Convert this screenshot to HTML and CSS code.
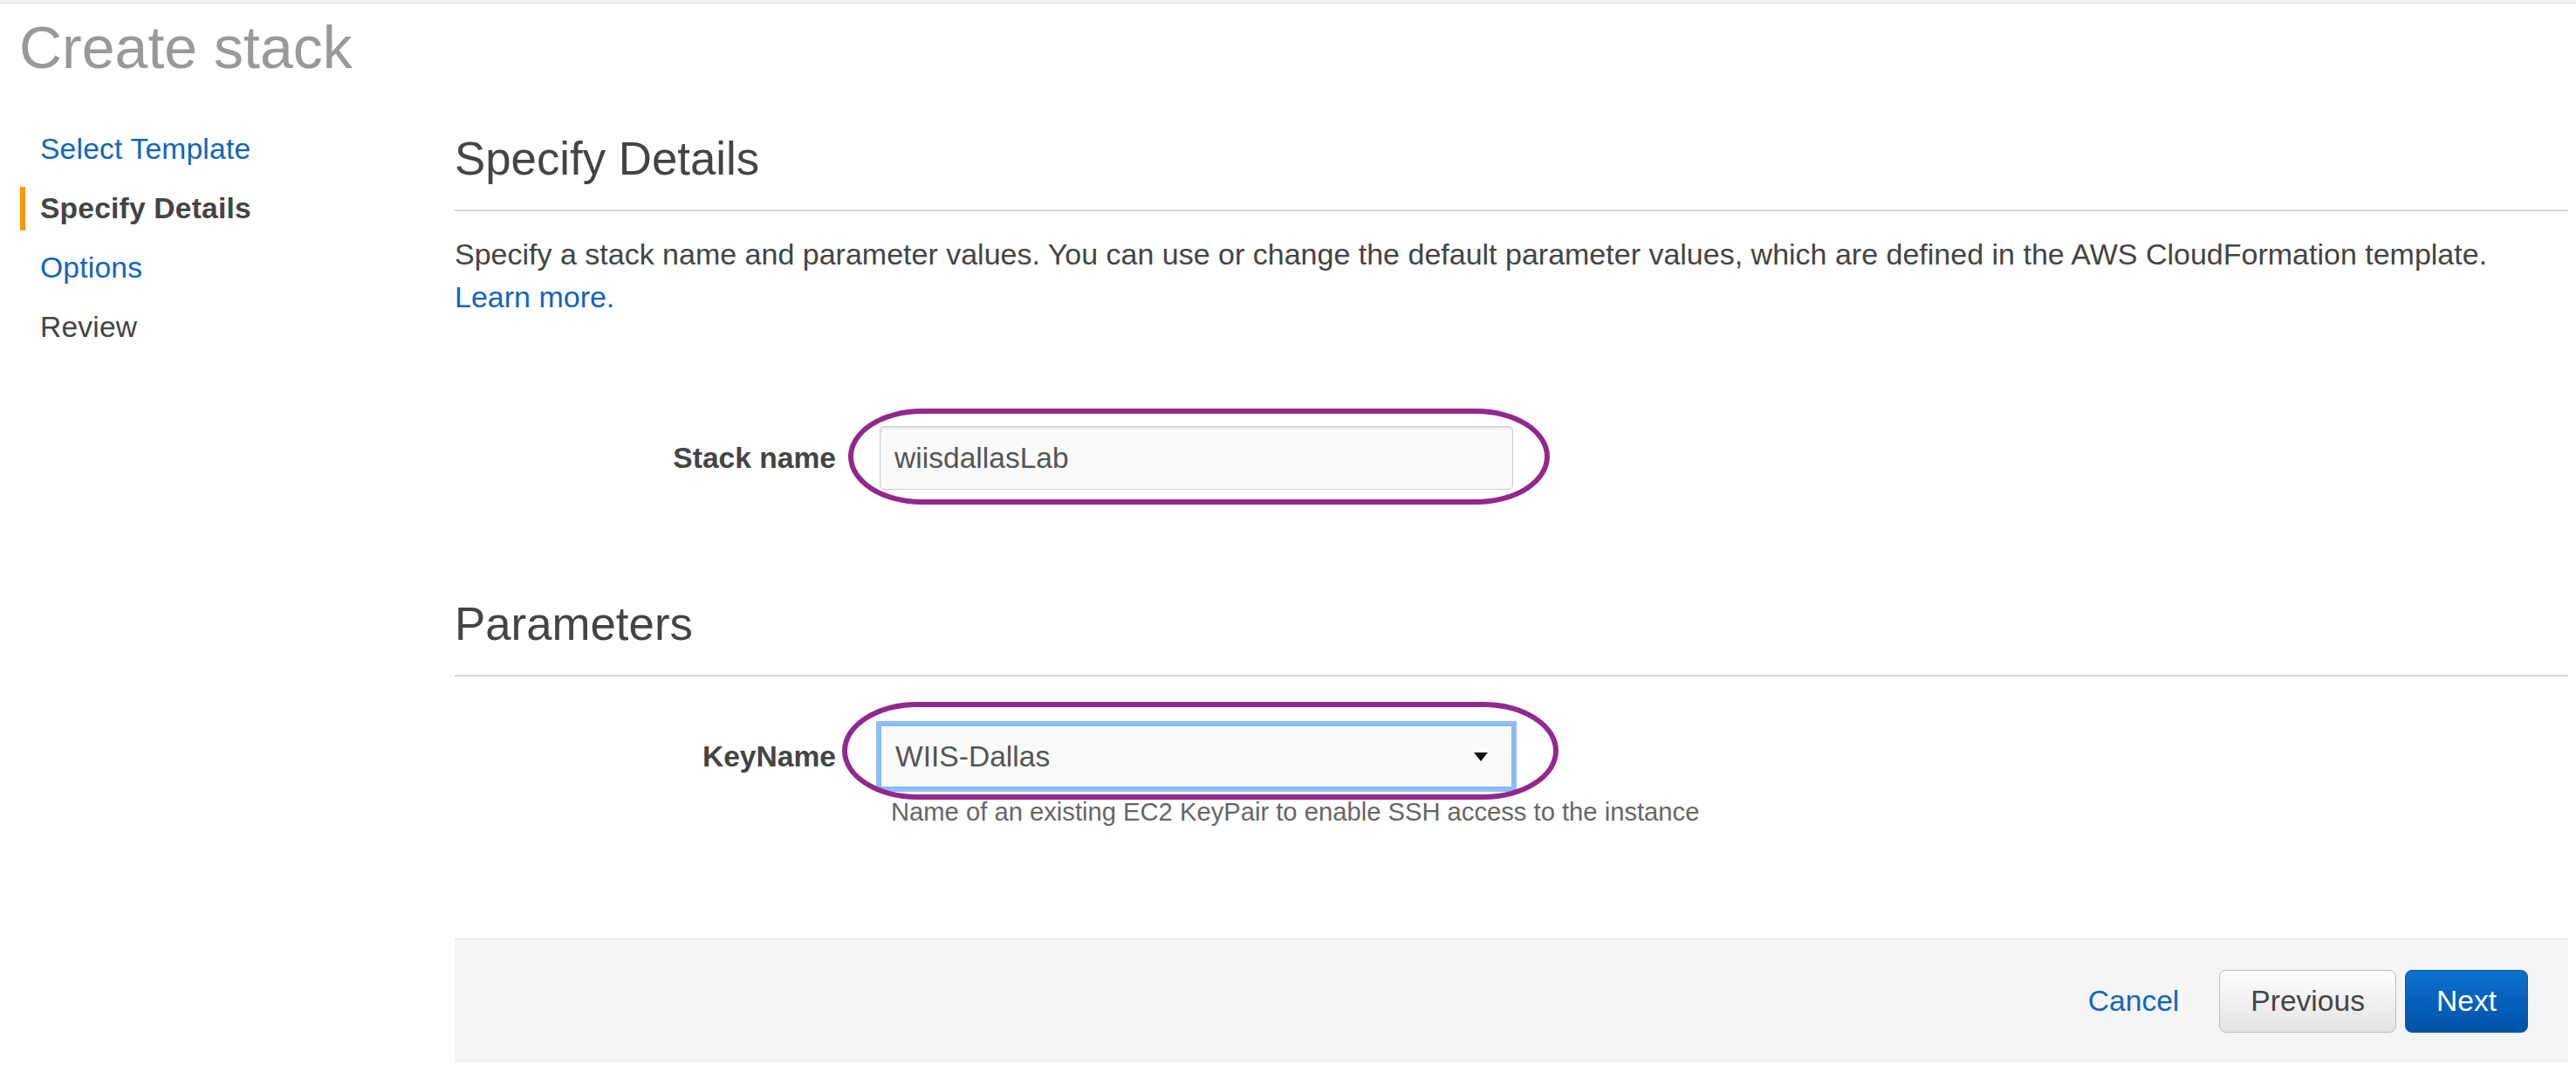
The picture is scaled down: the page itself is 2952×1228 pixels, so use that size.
FILE: index.html
```html
<!DOCTYPE html>
<html lang="en">
<head>
<meta charset="utf-8">
<title>Create stack</title>
<link rel="stylesheet" href="styles.css">
</head>
<body>
<div class="topbar"></div>
<h1 class="title">Create stack</h1>
<div class="layout">
  <nav class="nav">
    <a class="nav-item link">Select Template</a>
    <span class="nav-item active">Specify Details</span>
    <a class="nav-item link">Options</a>
    <span class="nav-item">Review</span>
  </nav>
  <main class="main">
    <h2 class="section-title">Specify Details</h2>
    <p class="intro">Specify a stack name and parameter values. You can use or change the default parameter values, which are defined in the AWS CloudFormation template.<br><a class="link">Learn more.</a></p>

    <div class="form-row first-row">
      <label class="form-label">Stack name</label>
      <div class="field">
        <input class="text-input" type="text" value="wiisdallasLab" readonly>
        <div class="mark mark-one"></div>
      </div>
    </div>

    <h2 class="section-title params-title">Parameters</h2>

    <div class="form-row second-row">
      <label class="form-label">KeyName</label>
      <div class="field">
        <div class="select">
          <span>WIIS-Dallas</span>
          <svg class="caret" width="16" height="10" viewBox="0 0 16 10"><path d="M0 0 H16 L8 10 Z" fill="#111"/></svg>
        </div>
        <div class="mark mark-two"></div>
      </div>
    </div>
    <div class="helper-row">
      <p class="helper">Name of an existing EC2 KeyPair to enable SSH access to the instance</p>
    </div>

    <div class="footer">
      <a class="cancel link">Cancel</a>
      <button class="btn btn-secondary">Previous</button>
      <button class="btn btn-primary">Next</button>
    </div>
  </main>
</div>
</body>
</html>
```
FILE: styles.css
```css
html, body {
  margin: 0;
  padding: 0;
  background: #fff;
}
body {
  font-family: "Liberation Sans", Arial, Helvetica, sans-serif;
  color: #444;
  font-size: 33.6px;
}
.topbar {
  height: 3px;
  background: #f2f2f2;
  border-bottom: 1px solid #e0e0e0;
}
.title {
  margin: 10px 0 0 22px;
  font-size: 68px;
  line-height: 80px;
  font-weight: normal;
  color: #999;
}
.layout {
  display: flex;
}
.nav {
  flex: none;
  width: 521px;
  padding-top: 52px;
  display: flex;
  flex-direction: column;
  gap: 18px;
  box-sizing: border-box;
}
.nav-item {
  display: block;
  height: 50px;
  line-height: 50px;
  margin-left: 23px;
  padding-left: 17px;
  border-left: 6px solid transparent;
  color: #444;
  white-space: nowrap;
  letter-spacing: 0.2px;
}
.nav-item.active {
  border-left-color: #ff9900;
  font-weight: bold;
}
.link {
  color: #1166bb;
  text-decoration: none;
}
.main {
  flex: 1;
  margin-right: 9px;
  padding-top: 56px;
  min-width: 0;
}
.section-title {
  margin: 0;
  font-size: 52.8px;
  line-height: 64px;
  font-weight: normal;
  color: #444;
  padding-bottom: 26px;
  border-bottom: 2px solid #d6d6d6;
}
.params-title {
  margin-top: 122px;
}
.intro {
  margin: 25px 0 0 0;
  font-size: 34px;
  line-height: 49px;
  color: #444;
}
.form-row {
  display: grid;
  grid-template-columns: 437px 726px;
  column-gap: 50px;
  align-items: center;
}
.first-row {
  margin-top: 123px;
}
.second-row {
  margin-top: 55px;
}
.form-label {
  text-align: right;
  font-weight: bold;
  color: #444;
  white-space: nowrap;
}
.field {
  position: relative;
  height: 73px;
}
.text-input {
  display: block;
  width: 100%;
  height: 73px;
  box-sizing: border-box;
  margin: 0;
  padding: 0 16px;
  border: 1px solid #cccccc;
  border-radius: 5px;
  background: #fafafa;
  box-shadow: inset 0 2px 3px rgba(0, 0, 0, 0.08);
  font-family: "Liberation Sans", Arial, Helvetica, sans-serif;
  font-size: 33.6px;
  color: #555;
  outline: none;
}
.select {
  display: flex;
  align-items: center;
  justify-content: space-between;
  height: 73px;
  box-sizing: border-box;
  padding: 0 27px 0 16px;
  border: 2px solid #86b8f0;
  background: #fafafa;
  box-shadow: 0 0 0 4px #8ebff5;
  color: #555;
}
.caret {
  display: block;
}
.mark {
  position: absolute;
  box-sizing: border-box;
  border: 6px solid #92288f;
  border-radius: 86px / 56px;
  pointer-events: none;
}
.mark-one {
  left: -36px;
  top: -20px;
  width: 804px;
  height: 110px;
}
.mark-two {
  left: -43px;
  top: -26px;
  width: 821px;
  height: 112px;
}
.helper-row {
  display: grid;
  grid-template-columns: 437px 726px;
  column-gap: 50px;
}
.helper {
  grid-column: 2;
  margin: 10px 0 0 13px;
  font-size: 29.2px;
  line-height: 34px;
  color: #666;
  white-space: nowrap;
}
.footer {
  margin-top: 128px;
  height: 142px;
  border-top: 1px solid #e3e3e3;
  background: #f5f5f5;
  display: flex;
  align-items: center;
  justify-content: flex-end;
  padding-right: 46px;
}
.cancel {
  margin-right: 46px;
}
.btn {
  height: 72px;
  box-sizing: border-box;
  padding: 0 35px;
  border-radius: 8px;
  font-family: "Liberation Sans", Arial, Helvetica, sans-serif;
  font-size: 33.6px;
  cursor: pointer;
}
.btn-secondary {
  border: 1px solid #bdbdbd;
  background: linear-gradient(#fefefe, #e3e3e3);
  color: #444;
  margin-right: 10px;
}
.btn-primary {
  border: 1px solid #0b5aab;
  background: linear-gradient(#0e6fcf, #0052a6);
  color: #fff;
}
```
